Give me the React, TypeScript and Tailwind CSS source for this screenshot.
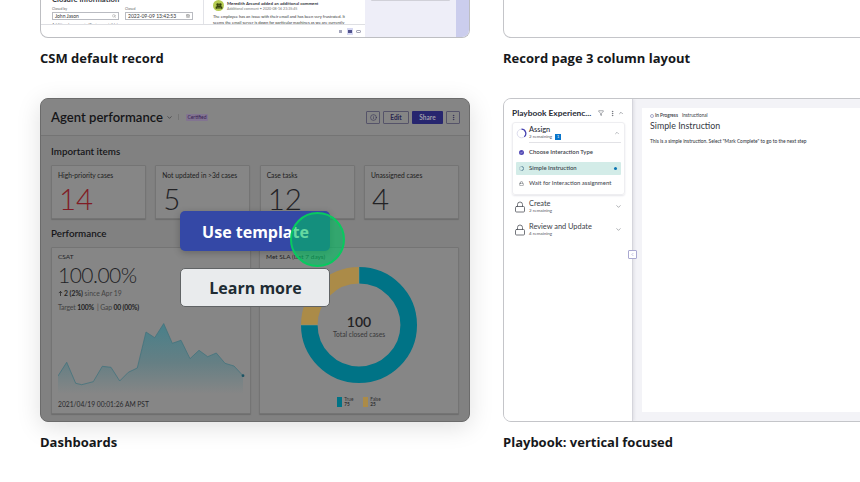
import React from "react";
import { ChevronDown, ChevronUp, Lock, Search, CalendarDays, Info, Filter, MoreVertical, ChevronLeft } from "lucide-react";

const trend: [number, number][] = [
  [0, 53], [8.7, 39.3], [17.7, 60.3], [23.7, 61.7], [35.3, 58.7], [44.3, 43.3], [53, 44.3], [61.7, 58],
  [70.3, 49.3], [79.3, 45], [88, 9], [96.7, 14.7], [105.7, 0.6], [114.3, 20.3], [123, 17.3], [132, 35.7],
  [141, 27.3], [149.7, 33.7], [158.3, 30], [167, 40.3], [176, 43], [185, 52.7],
];
const line = trend.map((p) => p.join(",")).join(" ");

function Caption({ children }: { children: React.ReactNode }) {
  return <h3 className="h-5 whitespace-nowrap text-[13px] leading-5 font-bold text-[#16181b]">{children}</h3>;
}

function RecordPreview() {
  return (
    <div className="flex h-[38px] w-[430px] overflow-hidden rounded-b-[8px] border border-t-0 border-[#bdbec2] bg-white font-['Lato',sans-serif]">
      <div className="flex w-[324px] flex-col">
        <div className="flex h-[26px] overflow-hidden border-b border-[#dedfe3]">
          <div className="w-[163px] border-r border-[#e2e3e8] pl-[11px]">
            <div className="-mt-[5px] h-[9px] text-[7.6px] leading-[9px] font-bold text-[#33363d]">Closure information</div>
            <div className="flex gap-[6px] pt-[3px]">
              <div className="w-[67px]">
                <div className="h-[5px] text-[3.5px] leading-[5px] text-[#666]">Closed by</div>
                <div className="flex h-[8px] items-center justify-between border border-[#b9bbc1] px-[2px] text-[5px] leading-[6px] text-[#333]">
                  <span>John Jason</span><Search size={4} className="text-[#777]" />
                </div>
              </div>
              <div className="w-[68px]">
                <div className="h-[5px] text-[3.5px] leading-[5px] text-[#666]">Closed</div>
                <div className="flex h-[8px] items-center justify-between border border-[#b9bbc1] px-[2px] text-[5px] leading-[6px] text-[#333]">
                  <span>2022-09-09 13:42:53</span><CalendarDays size={4} className="text-[#777]" />
                </div>
              </div>
            </div>
            <div className="mt-[2px] h-[5px] whitespace-nowrap text-[3.8px] leading-[5px] text-[#666]">Additional comments (Customer visible)</div>
          </div>
          <div className="flex-1 pl-[9px]">
            <div className="flex gap-[3px]">
              <div className="flex size-[11px] items-center justify-center rounded-full bg-[#b5cb52]">
                <svg viewBox="0 0 12 12" className="size-[8px]" fill="#35420c"><circle cx="4" cy="4" r="2" /><circle cx="8" cy="4" r="2" /><path d="M1 10V7q5-3 10 0v3H8V8H7v2H5V8H4v2z" /></svg>
              </div>
              <div className="whitespace-nowrap">
                <div className="h-[7px] text-[4.38px] leading-[8px] font-bold text-[#33363d]">Meredith Arcand added an additional comment</div>
                <div className="h-[5px] text-[3.6px] leading-[4px] text-[#777]">Additional comment • 2020-08-16 23:35:45</div>
              </div>
            </div>
            <div className="mt-[2px] whitespace-nowrap text-[4.05px] leading-[5.7px] text-[#333]">
              <div>The employee has an issue with their email and has been very frustrated. It</div>
              <div>seems the email server is down for particular machines as we are currently</div>
            </div>
          </div>
        </div>
        <div className="flex h-[12px] items-center justify-end gap-[3px] pr-[4px]">
          <span className="mr-[2px] size-[3px] bg-[#a4a6bd]" />
          <span className="flex h-[7px] w-[6px] items-center justify-center bg-[#d7d9f2]"><i className="h-[3px] w-[4px] bg-[#51528e]" /></span>
          <span className="h-[3px] w-[5px] rounded-[1px] border border-[#a5a6b8]" />
        </div>
      </div>
      <div className="flex-1 bg-[#eeeef8] px-[6px]"><div className="h-px rounded-b bg-[#d0d0d8]" /></div>
      <div className="w-[13px] bg-[#cbcded]" />
    </div>
  );
}

function Stat({ label, value, red = false }: { label: string; value: string; red?: boolean }) {
  return (
    <div className="h-[54px] w-[95px] rounded-[1px] border border-[#747474] bg-[#868686] pl-[6px] pt-[4px] shadow-[0_1px_1px_#6c6c6c]">
      <div className="h-[9px] whitespace-nowrap text-[6.7px] leading-[10px] text-[#1d1d20]">{label}</div>
      <div className={`mt-[2px] ml-[1px] text-[29.5px] leading-[35px] font-light ${red ? "text-[#801c25]" : "text-[#222225]"}`}>{value}</div>
    </div>
  );
}

function DashboardPreview() {
  return (
    <div className="relative h-[324px] w-[430px] rounded-[8px] shadow-[0_5px_24px_rgba(0,0,0,0.13)]">
      <div className="h-full overflow-hidden rounded-[8px] border border-[#6b6b6b] bg-[#818181] font-['Lato',sans-serif] text-[#222225]">
        <div className="flex h-[37px] items-center border-b border-[#747474] bg-[#858585] pr-[9px] pl-[10px]">
          <span className="w-[111px] shrink-0 whitespace-nowrap pt-px text-[13.1px] font-semibold text-[#151518]">Agent performance</span>
          <ChevronDown size={7} strokeWidth={1.8} className="ml-[4px] shrink-0" />
          <span className="ml-[5px] h-[6px] w-px bg-[#747474]" />
          <span className="ml-[7px] h-[7px] w-[22px] rounded-[1px] bg-[#827491] text-center text-[5px] leading-[7px] text-[#352052]">Certified</span>
          <div className="ml-auto flex gap-[3px] text-[6.5px] leading-[11px] font-bold text-[#292550]">
            <span className="flex h-[13px] w-[14px] items-center justify-center rounded-[1px] border border-[#555369]"><Info size={7} strokeWidth={1.7} /></span>
            <span className="h-[13px] w-[26px] rounded-[1px] border border-[#555369] text-center">Edit</span>
            <span className="h-[13px] w-[31px] rounded-[1px] bg-[#27266f] text-center leading-[13px] text-[#9f9ea9]">Share</span>
            <span className="flex h-[13px] w-[14px] items-center justify-center rounded-[1px] border border-[#555369]"><MoreVertical size={7} /></span>
          </div>
        </div>
        <div className="px-[10px]">
          <h4 className="flex h-[29px] items-center pt-[2px] text-[9.8px] font-semibold text-[#151518]">Important items</h4>
          <div className="flex justify-between">
            <Stat label="High-priority cases" value="14" red />
            <Stat label="Not updated in >3d cases" value="5" />
            <Stat label="Case tasks" value="12" />
            <Stat label="Unassigned cases" value="4" />
          </div>
          <h4 className="flex h-[28px] items-center pt-px text-[9.8px] font-semibold text-[#151518]">Performance</h4>
          <div className="flex justify-between">
            <div className="h-[167px] w-[200px] rounded-[1px] border border-[#747474] bg-[#868686] px-[6px] pt-[4px] shadow-[0_1px_1px_#6c6c6c]">
              <div className="h-[9px] text-[6.5px] leading-[9px]">CSAT</div>
              <div className="h-[28px] text-[21px] leading-[28px] font-light tracking-[-0.5px]">100.00%</div>
              <div className="flex h-[9px] items-center whitespace-nowrap text-[6.8px] leading-[9px] text-[#444]"><svg viewBox="0 0 6 7" className="mr-px h-[7px] w-[5px] shrink-0" fill="none" stroke="#222" strokeWidth="0.9"><path d="M3 6.5V1M1 3l2-2 2 2" /></svg><b className="text-[#222]">2 (2%)</b>&nbsp;since Apr 19</div>
              <div className="mt-[4px] h-[9px] whitespace-nowrap text-[6.8px] leading-[10px] tracking-[-0.16px] text-[#444]">Target <b className="text-[#222]">100%</b> &nbsp;| Gap <b className="text-[#222]">00 (00%)</b></div>
              <svg viewBox="0 0 187 71" className="mt-[12px] h-[71px] w-[187px]">
                <defs><linearGradient id="area" x1="0" y1="0" x2="0" y2="1"><stop stopColor="#48808a" /><stop offset=".55" stopColor="#657f84" /><stop offset="1" stopColor="#868686" /></linearGradient></defs>
                <polygon points={`0,71 ${line} 185,71`} fill="url(#area)" />
                <polyline points={line} fill="none" stroke="#44747e" strokeWidth=".8" />
                <circle cx="185" cy="52.7" r="1.4" fill="#1c5363" />
              </svg>
              <div className="mt-[4px] h-[10px] whitespace-nowrap text-[6.7px] leading-[12px] text-[#29292c]">2021/04/19 00:01:26 AM PST</div>
            </div>
            <div className="flex h-[167px] w-[200px] flex-col rounded-[1px] border border-[#747474] bg-[#868686] px-[6px] pt-[4px] shadow-[0_1px_1px_#6c6c6c]">
              <div className="h-[9px] whitespace-nowrap text-[6.5px] leading-[9px]">Met SLA (last 7 days)</div>
              <div className="mt-[5px] grid h-[118px] place-items-center">
                <svg viewBox="0 0 118 118" className="col-start-1 row-start-1 size-[118px]" fill="none" strokeWidth="16.6">
                  <path d="M59 9.3A49.7 49.7 0 1 1 9.3 59" stroke="#007386" />
                  <path d="M9.3 59A49.7 49.7 0 0 1 59 9.3" stroke="#ab8b48" />
                  <path d="M59 1V18M1 59H18" stroke="#88958d" strokeWidth=".5" />
                </svg>
                <div className="col-start-1 row-start-1 pt-[3px] text-center">
                  <div className="text-[14px] leading-[14px] font-semibold">100</div>
                  <div className="mt-px text-[6.7px] leading-[9px] text-[#38383a]">Total closed cases</div>
                </div>
              </div>
              <div className="mt-[13px] flex justify-center gap-[10px] text-[4.7px] leading-[5px] text-[#303032]">
                <div className="flex w-[16px] gap-[2px]"><i className="h-[10px] w-[5px] shrink-0 bg-[#007386]" /><div>True<br /><b>75</b></div></div>
                <div className="flex gap-[2px]"><i className="h-[10px] w-[5px] shrink-0 bg-[#ab8b48]" /><div>False<br /><b>25</b></div></div>
              </div>
            </div>
          </div>
        </div>
      </div>
      <div className="absolute top-[113px] left-[140px] flex w-[150px] flex-col items-end gap-[17px] text-[16px] font-bold">
        <button className="h-[40px] w-[150px] rounded-[5px] bg-[#3448a6] pt-px pl-px text-white shadow-[0_2px_7px_rgba(0,0,0,0.24)]">Use template</button>
        <button className="h-[39px] w-[150px] rounded-[5px] border border-[#606365] bg-[#e9ebed] pl-px text-[#202b33]">Learn more</button>
      </div>
      <div className="absolute top-[114px] left-[250px] size-[55px] rounded-full border-2 border-[#08c95f] bg-[#00bf63]/60" />
    </div>
  );
}

function Locked({ title, left }: { title: string; left: number }) {
  return (
    <div className="flex h-[23px] items-center">
      <Lock size={12} strokeWidth={1.6} className="ml-[2px] shrink-0 text-[#51545c]" />
      <div className="ml-[3px] whitespace-nowrap">
        <div className="text-[7.4px] leading-[8px] text-[#3b3e47]">{title}</div>
        <div className="text-[4.5px] leading-[6px] text-[#555861]">{left} remaining</div>
      </div>
      <ChevronDown size={7} className="mr-[3px] ml-auto text-[#777a82]" />
    </div>
  );
}

function PlaybookPreview() {
  return (
    <div className="flex h-[324px] w-[430px] overflow-hidden rounded-[8px] border border-[#c4c5c9] bg-[#f3f3f7] font-['Lato',sans-serif]">
      <div className="relative w-[129px] shrink-0 border-r border-[#d5d5dc] bg-white pr-[7px] pl-[8px] pt-[8px] shadow-[1px_0_3px_#dcdce3]">
        <div className="flex h-[12px] items-center text-[#555861]">
          <span className="w-[80px] shrink-0 whitespace-nowrap text-[8.35px] font-bold text-[#282c36]">Playbook Experienc...</span>
          <Filter size={6} className="ml-[6px]" />
          <MoreVertical size={7} className="ml-[5px]" />
          <ChevronUp size={6} className="ml-[2px]" />
        </div>
        <div className="mt-[3px] h-[73px] rounded-[3px] border border-[#eeeef1] px-[3px] shadow-[0_1px_2px_#e5e5ea]">
          <div className="flex h-[20px] items-center">
            <svg viewBox="0 0 12 12" className="size-[11px] shrink-0" fill="none"><circle cx="6" cy="6" r="4.7" stroke="#d8d8ea" /><path d="M6 1.3a4.7 4.7 0 0 1 3 8.3" stroke="#4844b2" strokeWidth="1.4" /></svg>
            <div className="ml-[2px] flex h-[20px] flex-1 items-center border-b border-[#e2e2e6]">
              <div className="whitespace-nowrap">
                <div className="text-[7.4px] leading-[8px] font-medium text-[#292c36]">Assign</div>
                <div className="flex gap-[3px] text-[4.5px] leading-[6px] text-[#555861]">2 remaining<span className="h-[6px] w-[6px] bg-[#0875cb] text-center text-[4px] text-white">1</span></div>
              </div>
              <ChevronUp size={6} className="mr-px ml-auto text-[#777a82]" />
            </div>
          </div>
          <div className="mt-[3px] flex h-[13px] items-center text-[5.95px] font-semibold text-[#3e414a]"><svg viewBox="0 0 6 6" className="mr-[5px] ml-[3px] size-[5px]"><circle cx="3" cy="3" r="3" fill="#5148b5" /><path d="m1.5 3 1 1 2-2" fill="none" stroke="white" strokeWidth=".6" /></svg>Choose Interaction Type</div>
          <div className="mt-[3px] flex h-[13px] items-center rounded-[1px] bg-[#d3ece8] text-[5.95px] font-semibold text-[#3e4b52]"><svg viewBox="0 0 6 6" className="mr-[5px] ml-[3px] size-[5px]" fill="none"><circle cx="3" cy="3" r="2.5" stroke="#a8c2cb" /><path d="M3 .5a2.5 2.5 0 0 1 0 5" stroke="#628d9e" /></svg>Simple Instruction<span className="mr-[4px] ml-auto size-[3px] rounded-full bg-[#0b75b3]" /></div>
          <div className="mt-[2px] flex h-[13px] items-center whitespace-nowrap text-[5.95px] font-medium text-[#4a4d55]"><Lock size={5} className="mr-[5px] ml-[3px] shrink-0" />Wait for Interaction assignment</div>
        </div>
        <Locked title="Create" left={2} /><Locked title="Review and Update" left={4} />
        <span className="absolute top-[151px] left-[124px] flex size-[9px] items-center justify-center rounded-[1px] border border-[#aaa9d1] bg-white text-[#7775b7]"><ChevronLeft size={5} className="shrink-0" /></span>
      </div>
      <div className="flex-1 py-[9px] pl-[9px]">
        <div className="h-[304px] bg-white pt-[3px] pl-[8px] text-[#353943]">
          <div className="flex h-[9px] items-center whitespace-nowrap text-[4.7px]"><span className="mr-px size-[4px] rounded-full border border-[#a8aaca]" /><b className="font-semibold">In Progress</b><span className="ml-[4px]">Instructional</span></div>
          <div className="text-[8.85px] leading-[12px]">Simple Instruction</div>
          <div className="mt-[5px] whitespace-nowrap text-[4.85px] leading-[8px] font-medium">This is a simple instruction. Select "Mark Complete" to go to the next step</div>
        </div>
      </div>
    </div>
  );
}

export default function App() {
  return (
    <main className="h-[482px] w-[860px] overflow-hidden bg-white font-['Open_Sans',sans-serif]">
      <div className="grid grid-cols-[430px_430px] gap-x-[33px] pl-[40px]">
        <section className="flex h-[98px] flex-col gap-[10px]"><RecordPreview /><Caption>CSM default record</Caption></section>
        <section className="flex h-[98px] flex-col gap-[10px]"><div className="h-[38px] rounded-b-[8px] border border-t-0 border-[#c4c5c9]" /><Caption>Record page 3 column layout</Caption></section>
        <section className="flex flex-col gap-[10px]"><DashboardPreview /><Caption>Dashboards</Caption></section>
        <section className="flex flex-col gap-[10px]"><PlaybookPreview /><Caption>Playbook: vertical focused</Caption></section>
      </div>
    </main>
  );
}
